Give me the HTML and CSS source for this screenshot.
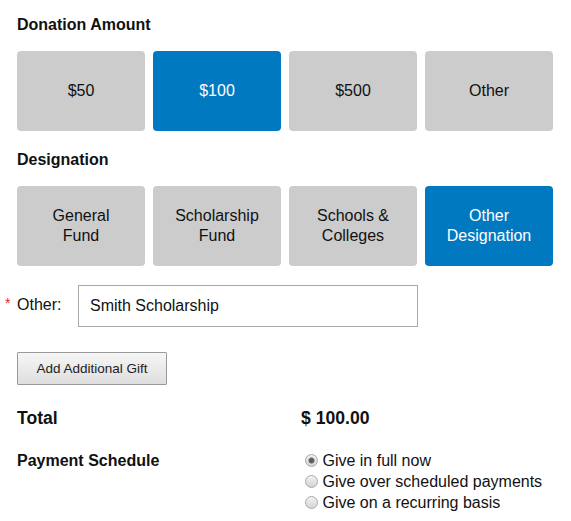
FILE: index.html
```html
<!DOCTYPE html>
<html>
<head>
    <title>Make a Gift</title>
    <link rel="stylesheet" href="styles.css">
</head>
<body>
    <div class="gift-form">
        <h2 class="section-title">Donation Amount</h2>
        <div class="choice-row">
            <button class="choice">$50</button>
            <button class="choice selected">$100</button>
            <button class="choice">$500</button>
            <button class="choice">Other</button>
        </div>

        <h2 class="section-title designation">Designation</h2>
        <div class="choice-row">
            <button class="choice">General<br>Fund</button>
            <button class="choice">Scholarship<br>Fund</button>
            <button class="choice">Schools &amp;<br>Colleges</button>
            <button class="choice selected">Other<br>Designation</button>
        </div>

        <div class="other-row">
            <label class="other-label"><span class="required">*</span>Other:</label>
            <input type="text" class="other-input" value="Smith Scholarship">
        </div>

        <button class="add-gift">Add Additional Gift</button>

        <div class="summary-row total-row">
            <div class="total-label">Total</div>
            <div class="total-value">$ 100.00</div>
        </div>

        <div class="summary-row schedule-row">
            <div class="schedule-label">Payment Schedule</div>
            <div class="schedule-options">
                <label class="option"><input type="radio" name="schedule" checked> Give in full now</label>
                <label class="option"><input type="radio" name="schedule"> Give over scheduled payments</label>
                <label class="option"><input type="radio" name="schedule"> Give on a recurring basis</label>
            </div>
        </div>
    </div>
</body>
</html>
```

FILE: styles.css
```css
body {
    margin: 0;
    font-family: "Liberation Sans", Arial, sans-serif;
    color: #111;
}
.gift-form {
    width: 536px;
    padding: 0 17px;
}
.section-title {
    font-size: 16px;
    font-weight: bold;
    line-height: 20px;
    margin: 15px 0 16px;
}
.section-title.designation {
    margin-top: 19px;
    margin-bottom: 16px;
}
.choice-row {
    display: grid;
    grid-template-columns: repeat(4, 1fr);
    gap: 8px;
}
.choice {
    height: 80px;
    border: none;
    border-radius: 4px;
    background: #cccccc;
    color: #111;
    font-family: "Liberation Sans", Arial, sans-serif;
    font-size: 16px;
    line-height: 20px;
    padding: 0;
    cursor: pointer;
}
.choice.selected {
    background: #0079c1;
    color: #fff;
}
.other-row {
    display: flex;
    align-items: center;
    margin-top: 19px;
}
.other-label {
    position: relative;
    font-size: 16px;
    width: 61px;
    margin-top: -2px;
}
.required {
    position: absolute;
    left: -12px;
    top: -1px;
    color: #e0262a;
    font-size: 14px;
}
.other-input {
    width: 340px;
    height: 42px;
    box-sizing: border-box;
    border: 1px solid #aaa;
    padding: 0 11px;
    font-family: "Liberation Sans", Arial, sans-serif;
    font-size: 16px;
    color: #111;
}
.add-gift {
    display: block;
    margin-top: 25px;
    width: 150px;
    height: 33px;
    padding: 0;
    border: 1px solid #999;
    border-radius: 1px;
    background: linear-gradient(#f6f6f6, #dedede);
    font-family: "Liberation Sans", Arial, sans-serif;
    font-size: 13.5px;
    color: #222;
}
.summary-row {
    display: grid;
    grid-template-columns: 284px 1fr;
}
.total-row {
    margin-top: 22px;
    font-size: 17.6px;
    font-weight: bold;
    line-height: 22px;
}
.schedule-row {
    margin-top: 21px;
}
.schedule-label {
    font-size: 16px;
    font-weight: bold;
    line-height: 21px;
}
.option {
    display: block;
    font-size: 16px;
    line-height: 21px;
}
.option input {
    appearance: none;
    -webkit-appearance: none;
    width: 13px;
    height: 13px;
    box-sizing: border-box;
    border: 1px solid #a9a9a9;
    border-radius: 50%;
    background: linear-gradient(#f2f2f2, #d4d4d4);
    margin: 0 0 0 4px;
    vertical-align: -1px;
}
.option input:checked {
    background: radial-gradient(circle, #555 0, #666 2.5px, transparent 3.5px), linear-gradient(#f2f2f2, #d4d4d4);
}
```
